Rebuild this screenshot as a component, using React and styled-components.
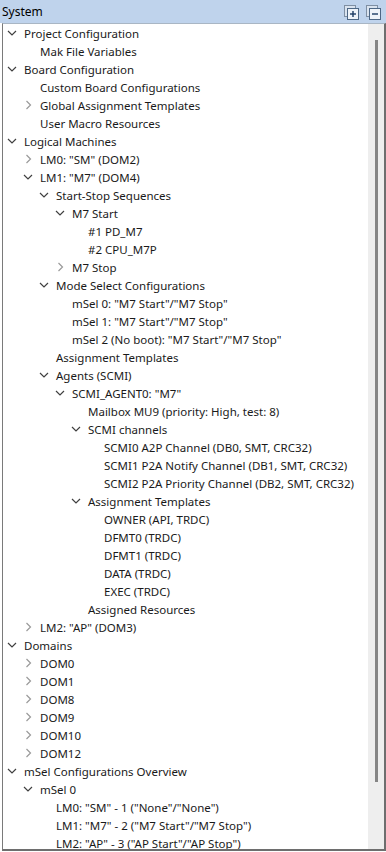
import React from "react";
import styled, { createGlobalStyle } from "styled-components";

const Global = createGlobalStyle`
  html, body { margin: 0; padding: 0; background: #ffffff; }
  body { font-family: "Noto Sans", "Open Sans", sans-serif; }
`;

const rows = [
  [0, "o", "Project Configuration"],
  [1, "l", "Mak File Variables"],
  [0, "o", "Board Configuration"],
  [1, "l", "Custom Board Configurations"],
  [1, "c", "Global Assignment Templates"],
  [1, "l", "User Macro Resources"],
  [0, "o", "Logical Machines"],
  [1, "c", 'LM0: "SM" (DOM2)'],
  [1, "o", 'LM1: "M7" (DOM4)'],
  [2, "o", "Start-Stop Sequences"],
  [3, "o", "M7 Start"],
  [4, "l", "#1 PD_M7"],
  [4, "l", "#2 CPU_M7P"],
  [3, "c", "M7 Stop"],
  [2, "o", "Mode Select Configurations"],
  [3, "l", 'mSel 0: "M7 Start"/"M7 Stop"'],
  [3, "l", 'mSel 1: "M7 Start"/"M7 Stop"'],
  [3, "l", 'mSel 2 (No boot): "M7 Start"/"M7 Stop"'],
  [2, "l", "Assignment Templates"],
  [2, "o", "Agents (SCMI)"],
  [3, "o", 'SCMI_AGENT0: "M7"'],
  [4, "l", "Mailbox MU9 (priority: High, test: 8)"],
  [4, "o", "SCMI channels"],
  [5, "l", "SCMI0 A2P Channel (DB0, SMT, CRC32)"],
  [5, "l", "SCMI1 P2A Notify Channel (DB1, SMT, CRC32)"],
  [5, "l", "SCMI2 P2A Priority Channel (DB2, SMT, CRC32)"],
  [4, "o", "Assignment Templates"],
  [5, "l", "OWNER (API, TRDC)"],
  [5, "l", "DFMT0 (TRDC)"],
  [5, "l", "DFMT1 (TRDC)"],
  [5, "l", "DATA (TRDC)"],
  [5, "l", "EXEC (TRDC)"],
  [4, "l", "Assigned Resources"],
  [1, "c", 'LM2: "AP" (DOM3)'],
  [0, "o", "Domains"],
  [1, "c", "DOM0"],
  [1, "c", "DOM1"],
  [1, "c", "DOM8"],
  [1, "c", "DOM9"],
  [1, "c", "DOM10"],
  [1, "c", "DOM12"],
  [0, "o", "mSel Configurations Overview"],
  [1, "o", "mSel 0"],
  [2, "l", 'LM0: "SM" - 1 ("None"/"None")'],
  [2, "l", 'LM1: "M7" - 2 ("M7 Start"/"M7 Stop")'],
  [2, "l", 'LM2: "AP" - 3 ("AP Start"/"AP Stop")'],
];

const Frame = styled.div`
  width: 386px;
  height: 851px;
  display: flex;
  flex-direction: column;
  overflow: hidden;
`;

const Header = styled.div`
  height: 23px;
  flex: 0 0 23px;
  background: #bfd3ec;
  display: flex;
  align-items: center;
  padding: 0 5px 0 2px;
  font-size: 12px;
  color: #000;
`;

const Title = styled.div`
  flex: 1;
  line-height: 23px;
`;

const HeaderButtons = styled.div`
  display: flex;
  gap: 7px;
  align-items: center;
  padding-top: 1px;
`;

const Body = styled.div`
  flex: 1;
  display: flex;
  margin-left: 2px;
  border-left: 1px solid #7a7a7a;
  border-right: 2px solid #6e6e6e;
  border-bottom: 2px solid #6e6e6e;
  border-top: 1px solid #a9b6c4;
  min-height: 0;
`;

const Tree = styled.div`
  flex: 1;
  overflow: hidden;
`;

const Row = styled.div`
  height: 18px;
  display: flex;
  align-items: center;
  padding-left: ${(p) => 1 + p.$level * 16}px;
  font-size: 11.5px;
  color: #1a1a1a;
  white-space: nowrap;
`;

const Twisty = styled.span`
  width: 16px;
  height: 18px;
  flex: 0 0 16px;
  display: flex;
  align-items: center;
  justify-content: center;
`;

const Label = styled.span`
  padding-left: 4px;
`;

const ScrollTrack = styled.div`
  width: 16px;
  flex: 0 0 16px;
  background: #eeeeee;
  display: flex;
  justify-content: center;
  padding-top: 16px;
`;

const Thumb = styled.div`
  width: 3px;
  height: 742px;
  background: #858585;
`;

function Chevron({ kind }) {
  if (kind === "o")
    return (
      <svg width="10" height="8" viewBox="0 0 10 8">
        <path d="M1 2 L5 6 L9 2" fill="none" stroke="#404040" strokeWidth="1.2" />
      </svg>
    );
  if (kind === "c")
    return (
      <svg width="8" height="10" viewBox="0 0 8 10">
        <path d="M2.5 1 L6.5 5 L2.5 9" fill="none" stroke="#9a9a9a" strokeWidth="1.2" />
      </svg>
    );
  return null;
}

function BoxIcon({ plus }) {
  return (
    <svg width="15" height="15" viewBox="0 0 15 15">
      <rect x="0.5" y="0.5" width="11" height="11" fill="#d9e3ef" stroke="#7f8fa3" />
      <rect x="3.5" y="3.5" width="11" height="11" fill="#eef3f9" stroke="#4d6785" />
      <path d="M6 9 H12" stroke="#1b3a63" strokeWidth="1.4" />
      {plus && <path d="M9 6 V12" stroke="#1b3a63" strokeWidth="1.4" />}
    </svg>
  );
}

export default function App() {
  return (
    <Frame>
      <Global />
      <Header>
        <Title>System</Title>
        <HeaderButtons>
          <BoxIcon plus />
          <BoxIcon />
        </HeaderButtons>
      </Header>
      <Body>
        <Tree>
          {rows.map(([lvl, kind, text], i) => (
            <Row key={i} $level={lvl}>
              <Twisty>
                <Chevron kind={kind} />
              </Twisty>
              <Label>{text}</Label>
            </Row>
          ))}
        </Tree>
        <ScrollTrack>
          <Thumb />
        </ScrollTrack>
      </Body>
    </Frame>
  );
}
